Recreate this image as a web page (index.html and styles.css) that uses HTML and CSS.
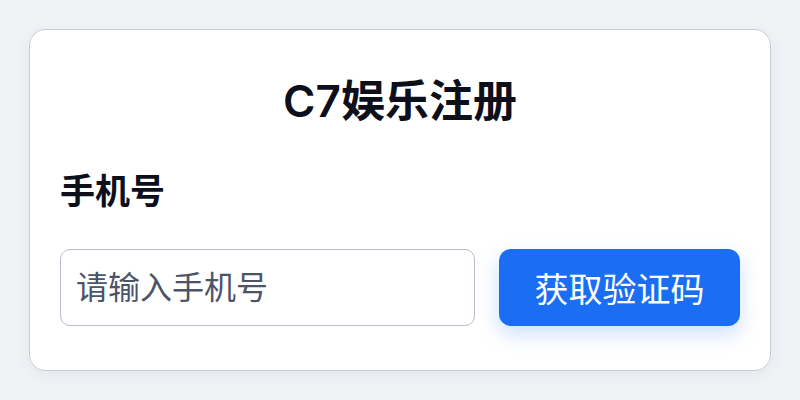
FILE: index.html
```html
<!DOCTYPE html>
<html lang="zh-CN">
<head>
    <meta charset="UTF-8">
    <meta name="viewport" content="width=device-width, initial-scale=1.0">
    <title>C7娱乐注册</title>
    <link rel="stylesheet" href="styles.css">
</head>
<body>
    <div class="card">
        <h1>C7娱乐注册</h1>

        <label class="field-label" for="phone">手机号</label>

        <div class="phone-row">
            <input type="tel" id="phone" class="phone-input" placeholder="请输入手机号">
            <button class="btn-code" type="button">获取验证码</button>
        </div>
    </div>
</body>
</html>
```

FILE: styles.css
```css
* {
    margin: 0;
    padding: 0;
    box-sizing: border-box;
}

body {
    font-family: Inter, "Noto Sans CJK SC", sans-serif;
    background: #f1f2f6;
    min-height: 100vh;
    display: flex;
    justify-content: center;
    align-items: center;
}

.card {
    width: 742px;
    background: #fff;
    border: 1.5px solid #c9cddb;
    border-radius: 16px;
    box-shadow: 0 4px 16px rgba(60, 70, 110, 0.06);
    padding: 45px 30px 44.5px;
    display: flex;
    flex-direction: column;
}

h1 {
    text-align: center;
    font-size: 44px;
    line-height: 52px;
    font-weight: 600;
    color: #0d0f1a;
    margin-bottom: 42px;
}

.field-label {
    font-size: 35px;
    line-height: 44px;
    font-weight: 600;
    color: #0d0f1a;
    margin-bottom: 35.5px;
}

.phone-row {
    display: flex;
    gap: 24px;
}

.phone-input {
    flex: 1;
    min-width: 0;
    height: 77px;
    border: 1.5px solid #b9bdcb;
    border-radius: 10px;
    padding: 0 15px;
    font-family: inherit;
    font-size: 32px;
    color: #222;
    background: #fff;
    outline: none;
}

.phone-input::placeholder {
    color: #4b5468;
}

.btn-code {
    flex: 0 0 241px;
    height: 77px;
    border: none;
    border-radius: 12px;
    background: #1b6ef3;
    color: #fff;
    font-family: inherit;
    font-size: 34px;
    white-space: nowrap;
    cursor: pointer;
    box-shadow: 0 8px 20px rgba(27, 110, 243, 0.22);
}
```
